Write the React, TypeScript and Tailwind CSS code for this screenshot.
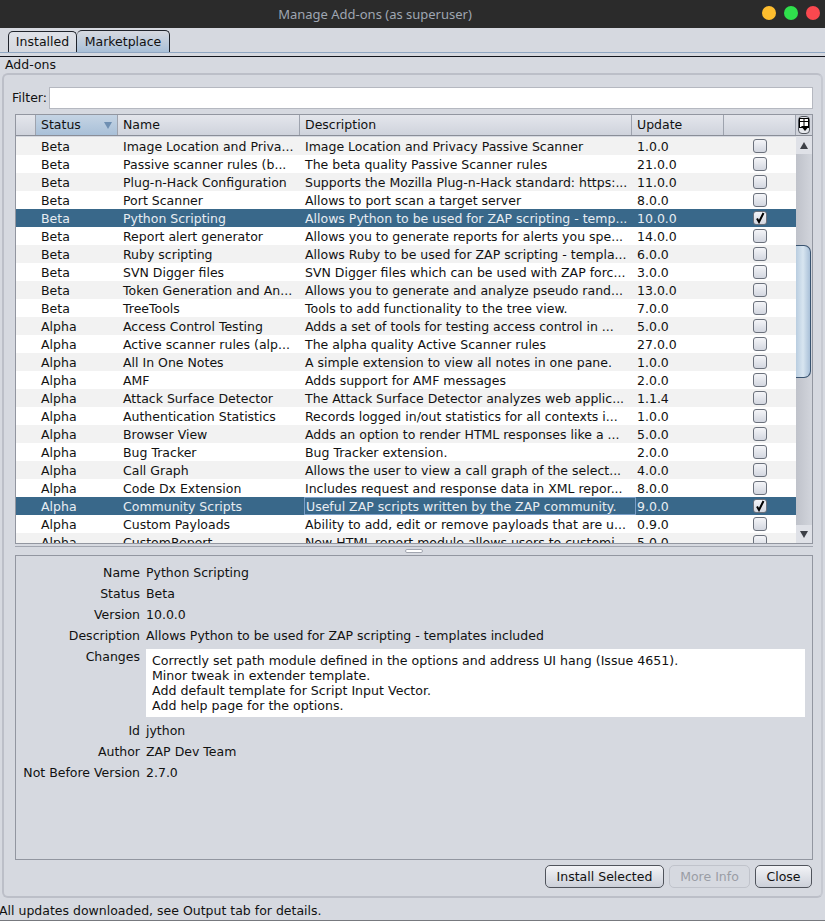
import React from "react";

type Row = [string, string, string, string, boolean?];

const rows: Row[] = [
  ["Beta", "Image Location and Priva...", "Image Location and Privacy Passive Scanner", "1.0.0"],
  ["Beta", "Passive scanner rules (b...", "The beta quality Passive Scanner rules", "21.0.0"],
  ["Beta", "Plug-n-Hack Configuration", "Supports the Mozilla Plug-n-Hack standard: https:...", "11.0.0"],
  ["Beta", "Port Scanner", "Allows to port scan a target server", "8.0.0"],
  ["Beta", "Python Scripting", "Allows Python to be used for ZAP scripting - temp...", "10.0.0", true],
  ["Beta", "Report alert generator", "Allows you to generate reports for alerts you spe...", "14.0.0"],
  ["Beta", "Ruby scripting", "Allows Ruby to be used for ZAP scripting - templa...", "6.0.0"],
  ["Beta", "SVN Digger files", "SVN Digger files which can be used with ZAP forc...", "3.0.0"],
  ["Beta", "Token Generation and An...", "Allows you to generate and analyze pseudo rand...", "13.0.0"],
  ["Beta", "TreeTools", "Tools to add functionality to the tree view.", "7.0.0"],
  ["Alpha", "Access Control Testing", "Adds a set of tools for testing access control in ...", "5.0.0"],
  ["Alpha", "Active scanner rules (alp...", "The alpha quality Active Scanner rules", "27.0.0"],
  ["Alpha", "All In One Notes", "A simple extension to view all notes in one pane.", "1.0.0"],
  ["Alpha", "AMF", "Adds support for AMF messages", "2.0.0"],
  ["Alpha", "Attack Surface Detector", "The Attack Surface Detector analyzes web applic...", "1.1.4"],
  ["Alpha", "Authentication Statistics", "Records logged in/out statistics for all contexts i...", "1.0.0"],
  ["Alpha", "Browser View", "Adds an option to render HTML responses like a ...", "5.0.0"],
  ["Alpha", "Bug Tracker", "Bug Tracker extension.", "2.0.0"],
  ["Alpha", "Call Graph", "Allows the user to view a call graph of the select...", "4.0.0"],
  ["Alpha", "Code Dx Extension", "Includes request and response data in XML repor...", "8.0.0"],
  ["Alpha", "Community Scripts", "Useful ZAP scripts written by the ZAP community.", "9.0.0", true],
  ["Alpha", "Custom Payloads", "Ability to add, edit or remove payloads that are u...", "0.9.0"],
  ["Alpha", "CustomReport", "New HTML report module allows users to customi...", "5.0.0"],
];

const details: [string, string][] = [
  ["Name", "Python Scripting"],
  ["Status", "Beta"],
  ["Version", "10.0.0"],
  ["Description", "Allows Python to be used for ZAP scripting - templates included"],
];

const Checkbox = ({ checked }: { checked?: boolean }) => (
  <div className="flex h-[14px] w-[14px] items-center justify-center rounded-[3px] border border-[#6b717c] bg-gradient-to-b from-[#f4f5f8] to-[#d3d7e0]">
    {checked && (
      <svg width="12" height="12" viewBox="0 0 12 12">
        <path d="M3 6.5 L5 10 L9.5 1" fill="none" stroke="#000" strokeWidth="2" />
      </svg>
    )}
  </div>
);

const HeaderCell = ({ label, className }: { label?: string; className: string }) => (
  <div className={`flex items-center border-r border-[#9ea3ae] bg-gradient-to-b from-[#e4e6ec] to-[#cfd3dc] pl-[5px] ${className}`}>
    {label}
  </div>
);

const Button = ({ label, className }: { label: string; className: string }) => (
  <button className={`h-[23px] rounded-[5px] border border-[#50545c] bg-gradient-to-b from-[#f3f4f7] to-[#ccd0d9] text-[12.5px] text-[#111] ${className}`}>
    {label}
  </button>
);

export default function App() {
  return (
    <div
      className="flex h-[921px] w-[825px] flex-col overflow-hidden bg-[#d6d9e0] text-[12.5px] leading-[18px] text-[#111]"
      style={{ fontFamily: '"DejaVu Sans", sans-serif' }}
    >
      {/* title bar */}
      <div
        className="relative flex h-[28px] shrink-0 items-center justify-center bg-[#2b2b2b] pr-[75px] text-[13px] text-[#9fa6b2]"
        style={{ fontFamily: '"Noto Sans", sans-serif' }}
      >
        Manage Add-ons (as superuser)
        <div className="absolute right-[5px] top-[6px] flex gap-[8px]">
          <div className="h-[14px] w-[14px] rounded-full bg-[#fdbd2e]" />
          <div className="h-[14px] w-[14px] rounded-full bg-[#2fe04c]" />
          <div className="h-[14px] w-[14px] rounded-full bg-[#f9484f]" />
        </div>
      </div>

      {/* tabs */}
      <div className="flex h-[25px] shrink-0 items-end border-b border-[#8fa6c2] pl-[8px]">
        <div className="flex h-[21px] w-[69px] items-center justify-center rounded-t-[5px] border border-b-0 border-[#20242c] bg-gradient-to-b from-[#dfe2e8] to-[#d6d9e0]">
          Installed
        </div>
        <div className="flex h-[22px] w-[93px] items-center justify-center rounded-t-[5px] border border-b-0 border-l-0 border-[#20242c] bg-gradient-to-b from-[#d6d9e0] to-[#a9c0d8]">
          Marketplace
        </div>
      </div>

      <div className="mt-[3px] h-px shrink-0 bg-[#12141c]" />
      <div className="h-[16px] shrink-0 pl-[5px] leading-[15px]">Add-ons</div>

      {/* main panel */}
      <div className="mx-[2px] flex h-[825px] shrink-0 flex-col rounded-[6px] border-2 border-[#bcbfc8] border-r-[#c6c9d1] pl-[11px] pr-[8px]">
        <div className="mt-[12px] flex h-[22px] shrink-0 items-center">
          <span className="-ml-[3px] w-[37px] shrink-0">Filter:</span>
          <div className="h-[22px] flex-1 border border-[#b5b8c0] bg-white" />
        </div>

        {/* table */}
        <div className="mt-[5px] flex h-[430px] shrink-0 flex-col border border-[#9296a0]">
          <div className="flex h-[21px] shrink-0 border-b border-[#8a8e98]">
            <HeaderCell className="w-[20px]" />
            <div className="flex w-[82px] items-center justify-between border-r border-[#9ea3ae] bg-gradient-to-b from-[#c5d4e4] to-[#a9c0d8] pl-[5px] pr-[5px]">
              Status
              <svg width="8" height="8" viewBox="0 0 8 8">
                <path d="M0 1 H8 L4 8 Z" fill="#6f8fb2" />
              </svg>
            </div>
            <HeaderCell label="Name" className="w-[182px]" />
            <HeaderCell label="Description" className="w-[332px]" />
            <HeaderCell label="Update" className="w-[92px]" />
            <HeaderCell className="w-[72px]" />
            <div className="flex flex-1 items-center justify-center bg-[#d0d3db]">
              <div className="flex h-[18px] w-[12px] items-start justify-center rounded-[4px] border border-[#50545c] bg-[#e6e8ed]">
                <svg width="12" height="14" viewBox="0 0 12 14" className="shrink-0">
                  <rect x="1.5" y="1.5" width="9" height="9" fill="#fff" stroke="#000" />
                  <path d="M1.5 4.5 H10.5 M6 1.5 V10.5" stroke="#000" />
                  <path d="M3 9 H11 L7 14 Z" fill="#000" />
                </svg>
              </div>
            </div>
          </div>

          <div className="flex min-h-0 flex-1">
            {/* rows */}
            <div className="mt-[1px] w-[780px] shrink-0 overflow-hidden">
              {rows.map((row, i) => {
                const selected = !!row[4];
                const focused = row[1] === "Community Scripts";
                return (
                  <div
                    key={row[1]}
                    className={`flex h-[18px] whitespace-nowrap leading-[20px] ${
                      selected ? "bg-[#39688a] text-[#e8edf2]" : i % 2 === 0 ? "bg-[#f2f2f2]" : "bg-white"
                    }`}
                  >
                    <div className="w-[25px] shrink-0" />
                    <div className="w-[82px] shrink-0">{row[0]}</div>
                    <div className="w-[182px] shrink-0">{row[1]}</div>
                    <div className={`w-[332px] shrink-0 ${focused ? "-ml-px mr-px border border-[#7a9fc7] pl-px leading-[18px]" : ""}`}>
                      {row[2]}
                    </div>
                    <div className="w-[92px] shrink-0">{row[3]}</div>
                    <div className="flex w-[61px] shrink-0 items-center justify-center">
                      <Checkbox checked={selected} />
                    </div>
                  </div>
                );
              })}
            </div>

            {/* scrollbar */}
            <div className="relative flex-1 bg-gradient-to-r from-[#bfc2ca] to-[#d2d5dc]">
              <div className="flex h-[18px] items-center justify-center bg-[#dfe1e7]">
                <svg width="8" height="8" viewBox="0 0 8 8">
                  <path d="M4 1 L8 8 H0 Z" fill="#3c3f46" />
                </svg>
              </div>
              <div className="absolute left-0 right-[1px] top-[109px] h-[133px] rounded-r-[7px] border-r border-t border-b border-[#39536f] bg-gradient-to-r from-[#b9cde0] via-[#d8e5f0] to-[#a9c0d8]" />
              <div className="absolute bottom-0 left-0 right-0 flex h-[18px] items-center justify-center bg-[#dfe1e7]">
                <svg width="8" height="8" viewBox="0 0 8 8">
                  <path d="M0 1 H8 L4 8 Z" fill="#3c3f46" />
                </svg>
              </div>
            </div>
          </div>
        </div>

        {/* split divider */}
        <div className="mt-[2px] flex h-[9px] shrink-0 items-center justify-center border-t border-[#a2a6b0]">
          <div className="h-[4px] w-[18px] rounded-full border border-[#a2a6b0] bg-white" />
        </div>

        {/* details */}
        <div className="flex h-[305px] shrink-0 flex-col border border-[#9296a0] pt-[8px]">
          {details.map(([k, v]) => (
            <div key={k} className="mb-[3px] flex h-[18px]">
              <div className="w-[124px] shrink-0 text-right">{k}</div>
              <div className="pl-[6px]">{v}</div>
            </div>
          ))}
          <div className="flex">
            <div className="w-[124px] shrink-0 text-right">Changes</div>
            <div className="ml-[6px] mt-[1px] h-[68px] w-[659px] bg-white pl-[6px] pt-[4px] text-[12.6px] leading-[15px]">
              <div>Correctly set path module defined in the options and address UI hang (Issue 4651).</div>
              <div>Minor tweak in extender template.</div>
              <div>Add default template for Script Input Vector.</div>
              <div>Add help page for the options.</div>
            </div>
          </div>
          <div className="mb-[3px] mt-[5px] flex h-[18px]">
            <div className="w-[124px] shrink-0 text-right">Id</div>
            <div className="pl-[6px]">jython</div>
          </div>
          <div className="mb-[3px] flex h-[18px]">
            <div className="w-[124px] shrink-0 text-right">Author</div>
            <div className="pl-[6px]">ZAP Dev Team</div>
          </div>
          <div className="flex h-[18px]">
            <div className="w-[124px] shrink-0 text-right">Not Before Version</div>
            <div className="pl-[6px]">2.7.0</div>
          </div>
        </div>

        {/* buttons */}
        <div className="mr-px mt-[5px] flex justify-end gap-[5px]">
          <Button label="Install Selected" className="w-[119px]" />
          <button className="h-[23px] w-[81px] rounded-[5px] border border-[#c0c3cb] bg-[#d6d9e0] text-[12.5px] text-[#9a9da5]">
            More Info
          </button>
          <Button label="Close" className="w-[57px]" />
        </div>
      </div>

      {/* status bar */}
      <div className="-ml-px h-[22px] shrink-0 whitespace-nowrap pt-[4px] leading-[18px]">
        All updates downloaded, see Output tab for details.
      </div>
      <div className="flex-1 bg-[#77797e]" />
    </div>
  );
}
